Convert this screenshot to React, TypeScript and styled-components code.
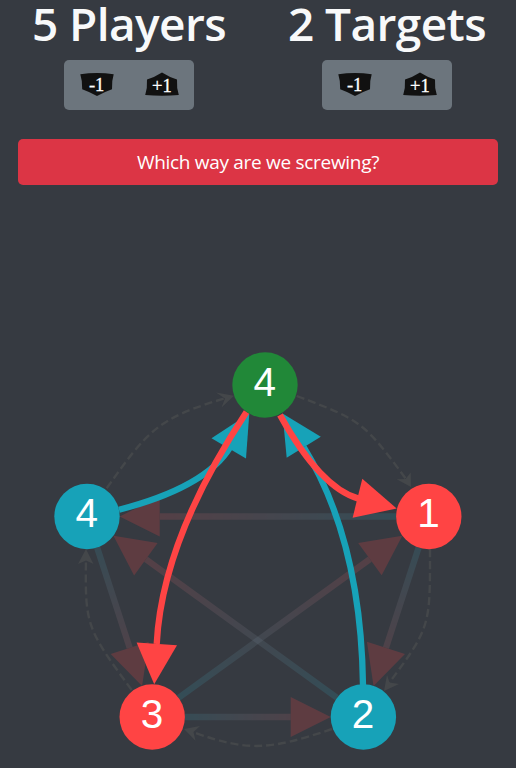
import React from 'react';
import styled, { createGlobalStyle } from 'styled-components';

const GlobalStyle = createGlobalStyle`
  body {
    margin: 0;
    background: #363a41;
    overflow: hidden;
  }
`;

const Page = styled.main`
  display: flex;
  flex-direction: column;
  height: 768px;
  background: #363a41;
  color: #f8f9fa;
  font-family: 'Open Sans', 'Noto Sans', sans-serif;
`;

const Counters = styled.header`
  display: grid;
  grid-template-columns: 1fr 1fr;
  height: 139px;
`;

const Counter = styled.section`
  display: flex;
  flex-direction: column;
  align-items: center;
`;

const Title = styled.h1`
  margin: 0;
  height: 60px;
  line-height: 47px;
  font-size: 46px;
  font-weight: 600;
  letter-spacing: -0.6px;
  white-space: nowrap;
`;

const ButtonGroup = styled.div`
  display: flex;
  width: 130px;
  height: 50px;
  border-radius: 5px;
  background: #6c757d;
`;

const StepButton = styled.button`
  flex: 1;
  display: flex;
  align-items: center;
  justify-content: center;
  padding: 0 0 1px;
  border: 0;
  background: none;
`;

const Banner = styled.button`
  flex: none;
  margin: 0 18px;
  height: 46px;
  padding: 0 0 1px;
  border: 0;
  border-radius: 5px;
  background: #dc3545;
  color: #fff;
  font-family: inherit;
  font-size: 19px;
  letter-spacing: -0.3px;
`;

const Graph = styled.svg`
  display: block;
  flex: none;
  width: 516px;
  height: 583px;
`;

const NodeLabel = styled.text`
  fill: #fff;
  font-family: 'Liberation Sans', Arial, sans-serif;
  font-size: 40.5px;
  text-anchor: middle;
`;

const StepLabel = styled.text`
  fill: #fff;
  font-family: 'Liberation Serif', 'Times New Roman', serif;
  font-size: 18.5px;
  text-anchor: middle;
  stroke: #fff;
  stroke-width: 0.3px;
`;

const TEAL = '#17a2b8';
const RED = '#ff4444';
const GREEN = '#218838';
const RADIUS = 32.7;

type Point = [number, number];

const nodes: { at: Point; label: string; color: string }[] = [
  { at: [265, 385], label: '4', color: GREEN },
  { at: [428.8, 516.5], label: '1', color: RED },
  { at: [363.4, 717], label: '2', color: TEAL },
  { at: [152.2, 717], label: '3', color: RED },
  { at: [87, 516.5], label: '4', color: TEAL },
];

const fadedEdges: [number, number][] = [
  [1, 4],
  [2, 4],
  [4, 3],
  [3, 1],
  [3, 2],
  [1, 2],
];

const ringEdges = [
  { d: 'M106.7 488.3 C148 430 158 418 226 398', head: '234,395.7 216,392.5 225,398.5 221.5,407.5' },
  { d: 'M296.7 396 C361 420 364 422 406 479', head: '411,487 410.7,472.5 405.5,479 396.7,479.3' },
  { d: 'M430 549 C430 625 431 627 389 683', head: '384,691 387,675 389.5,682.5 399,684' },
  { d: 'M332 729 C270 750 248 752 193 732', head: '184,729 200,726 193.5,732 195.5,740.7' },
  { d: 'M131.7 690 C86 628 85 625 86 558', head: '86,549 93.5,564 86,560.5 78,564' },
];

const targetEdges = [
  { color: TEAL, d: 'M119 509.7 Q206 487 230 447.3', head: '249.3,413.5 246,458.5 211.5,438.3' },
  { color: TEAL, d: 'M363 685 Q361 540 303.7 447.2', head: '282.5,413.5 320.8,436.7 286.7,457.8' },
  { color: RED, d: 'M280 415 Q320.5 488 358.5 498.6', head: '396.7,508.5 362.3,478.8 352.6,517.8' },
  { color: RED, d: 'M246.5 412 Q162 540 156.7 644', head: '154.2,684.2 136.6,642.6 177,645.2' },
];

function FadedEdge({ from, to, id }: { from: Point; to: Point; id: string }) {
  const dx = to[0] - from[0];
  const dy = to[1] - from[1];
  const len = Math.hypot(dx, dy);
  const ux = dx / len;
  const uy = dy / len;
  const tip: Point = [to[0] - ux * RADIUS, to[1] - uy * RADIUS];
  const base: Point = [tip[0] - ux * 40, tip[1] - uy * 40];
  const corners = [
    tip,
    [base[0] - uy * 20, base[1] + ux * 20],
    [base[0] + uy * 20, base[1] - ux * 20],
  ];
  return (
    <g opacity="0.2">
      <linearGradient
        id={id}
        gradientUnits="userSpaceOnUse"
        x1={from[0]}
        y1={from[1]}
        x2={to[0]}
        y2={to[1]}
      >
        <stop offset="0" stopColor={TEAL} />
        <stop offset="1" stopColor={RED} />
      </linearGradient>
      <line
        x1={from[0] + ux * RADIUS}
        y1={from[1] + uy * RADIUS}
        x2={base[0]}
        y2={base[1]}
        stroke={`url(#${id})`}
        strokeWidth="6.3"
      />
      <polygon points={corners.map((c) => c.join(',')).join(' ')} fill={RED} />
    </g>
  );
}

function MinusIcon() {
  return (
    <svg width="36" height="28" viewBox="0 0 36 28">
      <path d="M1.3 3.3Q18 0.8 34.7 3.3Q32.6 10 33 18.2Q25 21 18 25Q11 21 3.2 18.2Q3.5 10 1.3 3.3Z" fill="#111" />
      <StepLabel x="17.6" y="20">-1</StepLabel>
    </svg>
  );
}

function PlusIcon() {
  return (
    <svg width="36" height="28" viewBox="0 0 36 28">
      <path d="M18 1.5Q25 6 33 8.5Q32.5 17 34.8 24Q18 25.5 1.2 24Q3.5 17 3 8.5Q11 6 18 1.5Z" fill="#111" />
      <StepLabel x="17.8" y="20.8">+1</StepLabel>
    </svg>
  );
}

function CounterPanel({ title }: { title: string }) {
  return (
    <Counter>
      <Title>{title}</Title>
      <ButtonGroup>
        <StepButton><MinusIcon /></StepButton>
        <StepButton><PlusIcon /></StepButton>
      </ButtonGroup>
    </Counter>
  );
}

export default function App() {
  return (
    <Page>
      <GlobalStyle />
      <Counters>
        <CounterPanel title="5 Players" />
        <CounterPanel title="2 Targets" />
      </Counters>
      <Banner>Which way are we screwing?</Banner>
      <Graph viewBox="0 185 516 583">
        {ringEdges.map((e) => (
          <g key={e.d}>
            <path d={e.d} fill="none" stroke="#44474a" strokeWidth="2.4" strokeDasharray="8 4" />
            <polygon points={e.head} fill="#44474a" />
          </g>
        ))}
        {fadedEdges.map(([a, b]) => (
          <FadedEdge key={`${a}-${b}`} id={`edge-${a}-${b}`} from={nodes[a].at} to={nodes[b].at} />
        ))}
        {targetEdges.map((e) => (
          <g key={e.d}>
            <path d={e.d} fill="none" stroke={e.color} strokeWidth="6.3" />
            <polygon points={e.head} fill={e.color} />
          </g>
        ))}
        {nodes.map((n) => (
          <g key={n.at.join()}>
            <circle cx={n.at[0]} cy={n.at[1]} r={RADIUS} fill={n.color} />
            <NodeLabel x={n.at[0] - 0.3} y={n.at[1] + 10.8}>{n.label}</NodeLabel>
          </g>
        ))}
      </Graph>
    </Page>
  );
}
